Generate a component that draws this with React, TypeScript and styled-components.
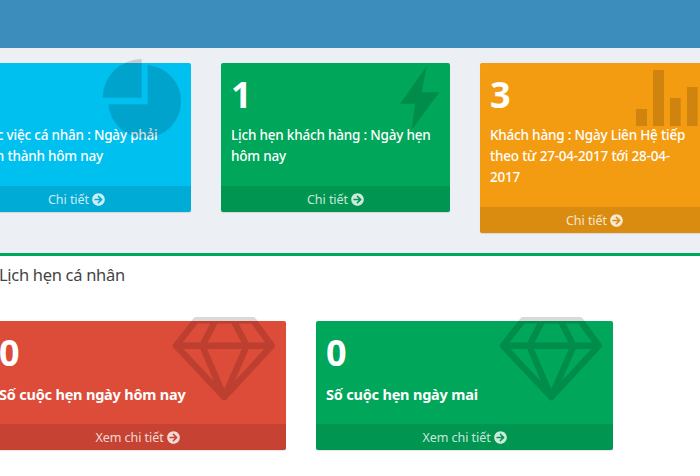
import { ReactNode } from "react";
import styled, { createGlobalStyle } from "styled-components";
import { FaArrowCircleRight } from "react-icons/fa";

const GlobalStyle = createGlobalStyle`
  html, body {
    margin: 0;
    height: 476px;
    overflow: hidden;
    background: #fff;
    font-family: "Noto Sans", "Liberation Sans", sans-serif;
  }
  * { box-sizing: border-box; }
`;

const PieIcon = () => (
  <IconSvg viewBox="0 0 90 90" $w={90}>
    <path d="M56.7 12 A36.5 36.5 0 1 1 17.3 51.3 L56.7 51.3 Z" />
    <path d="M50.7 6 A39 39 0 0 0 11.7 44.7 L50.7 44.7 Z" />
  </IconSvg>
);

const BoltIcon = () => (
  <IconSvg viewBox="0 0 90 90" $w={90}>
    <path d="M76.7 13 L50 50.7 L65 50.7 L61.7 77 L89.3 39.3 L71.7 39.3 Z" />
  </IconSvg>
);

const BarsIcon = () => (
  <IconSvg viewBox="0 0 90 90" $w={90}>
    <path d="M27 56h11v17H27z M44 17h11v56H44z M61 45h10.7v28H61z M78 34h10.7v39H78z" />
  </IconSvg>
);

const GemIcon = () => (
  <IconSvg viewBox="0 0 110 90" $w={110}>
    <path
      d="M30 9.3 H87 L105.7 34.7 L58.3 86 L10 34.7 Z M10 34.7 H105.7 M49.6 9.3 L36.3 34.7 L58.3 86 L80.7 34.7 L67.3 9.3"
      fill="none"
      stroke="rgba(0,0,0,0.15)"
      strokeWidth="6.5"
      strokeLinejoin="round"
    />
  </IconSvg>
);

type StatProps = {
  color: string;
  count: string;
  text: string;
  link: string;
  icon: ReactNode;
  width: number;
  strong?: boolean;
};

const StatCard = ({ color, count, text, link, icon, width, strong }: StatProps) => (
  <Card $color={color} $width={width}>
    <Inner>
      <Count>{count}</Count>
      <Label $strong={strong}>{text}</Label>
    </Inner>
    {icon}
    <CardFooter>
      {link} <FaArrowCircleRight size={13} />
    </CardFooter>
  </Card>
);

export default function App() {
  return (
    <>
      <GlobalStyle />
      <TopBar />
      <Content>
        <TopRow>
          <StatCard
            color="#00c0ef"
            count="2"
            text="Thực việc cá nhân : Ngày phải hoàn thành hôm nay"
            link="Chi tiết"
            icon={<PieIcon />}
            width={229}
          />
          <StatCard
            color="#00a65a"
            count="1"
            text="Lịch hẹn khách hàng : Ngày hẹn hôm nay"
            link="Chi tiết"
            icon={<BoltIcon />}
            width={229}
          />
          <StatCard
            color="#f39c12"
            count="3"
            text="Khách hàng : Ngày Liên Hệ tiếp theo từ 27-04-2017 tới 28-04-2017"
            link="Chi tiết"
            icon={<BarsIcon />}
            width={229}
          />
        </TopRow>
      </Content>
      <Box>
        <BoxTitle>Lịch hẹn cá nhân</BoxTitle>
        <BottomRow>
          <StatCard
            color="#dd4b39"
            count="0"
            text="Số cuộc hẹn ngày hôm nay"
            link="Xem chi tiết"
            icon={<GemIcon />}
            width={297}
            strong
          />
          <StatCard
            color="#00a65a"
            count="0"
            text="Số cuộc hẹn ngày mai"
            link="Xem chi tiết"
            icon={<GemIcon />}
            width={297}
            strong
          />
        </BottomRow>
      </Box>
    </>
  );
}

const TopBar = styled.header`
  height: 48px;
  background: #3c8dbc;
`;

const Content = styled.section`
  background: #ecf0f5;
  padding: 15px 0 20px;
`;

const TopRow = styled.div`
  display: flex;
  align-items: flex-start;
  gap: 30px;
  margin-left: -38px;
  width: 800px;
`;

const Box = styled.section`
  background: #fff;
  border-top: 3px solid #00a65a;
  height: 223px;
`;

const BoxTitle = styled.h3`
  margin: 0 0 0 -1px;
  padding-top: 7px;
  height: 65px;
  font-size: 16.5px;
  font-weight: 400;
  line-height: 24px;
  letter-spacing: -0.3px;
  color: #444;
`;

const BottomRow = styled.div`
  display: flex;
  align-items: flex-start;
  gap: 30px;
  margin-left: -11px;
  width: 800px;
`;

const Card = styled.div<{ $color: string; $width: number }>`
  position: relative;
  flex: none;
  width: ${(p) => p.$width}px;
  background: ${(p) => p.$color};
  color: #fff;
  border-radius: 2px;
  box-shadow: 0 1px 1px rgba(0, 0, 0, 0.1);
`;

const Inner = styled.div`
  padding: 10px;
`;

const Count = styled.h3`
  margin: 0 0 8px;
  font-size: 36px;
  font-weight: 700;
  line-height: 44px;
`;

const Label = styled.p<{ $strong?: boolean }>`
  margin: 0 0 9px;
  font-size: ${(p) => (p.$strong ? 14.5 : 13.5)}px;
  font-weight: ${(p) => (p.$strong ? 700 : 500)};
  line-height: ${(p) => (p.$strong ? 22 : 21)}px;
  letter-spacing: -0.2px;
`;

const IconSvg = styled.svg<{ $w: number }>`
  position: absolute;
  top: -10px;
  right: 10px;
  width: ${(p) => p.$w}px;
  height: 90px;
  fill: rgba(0, 0, 0, 0.15);
  overflow: visible;
`;

const CardFooter = styled.a`
  position: relative;
  display: flex;
  align-items: center;
  justify-content: center;
  gap: 3px;
  height: 26px;
  background: rgba(0, 0, 0, 0.1);
  color: rgba(255, 255, 255, 0.8);
  font-size: 12.5px;
  letter-spacing: -0.05px;
  border-radius: 0 0 2px 2px;
`;
